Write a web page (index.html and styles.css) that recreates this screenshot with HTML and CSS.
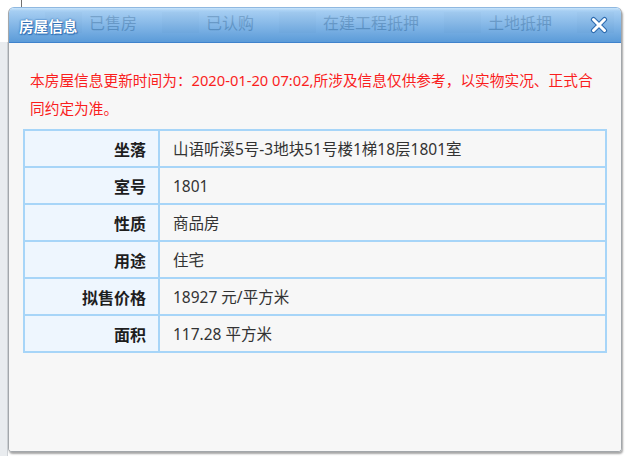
FILE: index.html
```html
<!DOCTYPE html>
<html lang="zh-CN">
<head>
<meta charset="utf-8">
<title>房屋信息</title>
<link rel="stylesheet" href="styles.css">
</head>
<body>
<div class="page">
  <div class="topline"></div>
  <div class="tabbar">
    <div class="tab"><span class="tab-icon"></span><span class="tab-label">已售房</span></div>
    <div class="tab"><span class="tab-icon"></span><span class="tab-label">已认购</span></div>
    <div class="tab"><span class="tab-icon"></span><span class="tab-label">在建工程抵押</span></div>
    <div class="tab"><span class="tab-icon"></span><span class="tab-label">土地抵押</span></div>
    <div class="tab"><span class="tab-icon"></span></div>
  </div>
  <div class="side"></div>

  <div class="dialog">
    <div class="dialog-header">
      <span class="dialog-title">房屋信息</span>
      <button class="close" aria-label="关闭">
        <svg width="18" height="18" viewBox="0 0 18 18">
          <path d="M3.5 3.5 L14.5 14.5 M14.5 3.5 L3.5 14.5" stroke="#2e6cb0" stroke-width="5.2" stroke-linecap="round" fill="none"/>
          <path d="M3.5 3.5 L14.5 14.5 M14.5 3.5 L3.5 14.5" stroke="#ffffff" stroke-width="3" stroke-linecap="round" fill="none"/>
        </svg>
      </button>
    </div>
    <div class="dialog-body">
      <p class="notice">本房屋信息更新时间为：2020-01-20 07:02,所涉及信息仅供参考，以实物实况、正式合<br>同约定为准。</p>
      <table class="info">
        <tr><th>坐落</th><td>山语听溪5号-3地块51号楼1梯18层1801室</td></tr>
        <tr><th>室号</th><td>1801</td></tr>
        <tr><th>性质</th><td>商品房</td></tr>
        <tr><th>用途</th><td>住宅</td></tr>
        <tr><th>拟售价格</th><td>18927 元/平方米</td></tr>
        <tr><th>面积</th><td>117.28 平方米</td></tr>
      </table>
    </div>
  </div>
</div>
</body>
</html>
```

FILE: styles.css
```css
html, body {
  margin: 0;
  padding: 0;
}

body {
  background: #ffffff;
  font-family: "Noto Sans", "Noto Sans CJK SC", sans-serif;
}

.page {
  position: relative;
  width: 625px;
  height: 456px;
  overflow: hidden;
  background: #ffffff;
}

.topline {
  position: absolute;
  left: 21px;
  top: 0;
  width: 1px;
  height: 8px;
  background: #707070;
}

.tabbar {
  display: flex;
  margin-top: 7px;
  height: 35px;
  padding: 5px 0 0 45px;
  box-sizing: border-box;
  align-items: flex-start;
  white-space: nowrap;
}

.tab {
  display: flex;
  flex: none;
  align-items: center;
  gap: 7px;
  padding-right: 25px;
}

.tab-icon {
  flex: none;
  width: 37px;
  height: 21px;
  background: rgba(0, 0, 0, 0.08);
}

.tab-label {
  font-size: 16px;
  line-height: 20px;
  margin-top: -2px;
  color: #1a1a1a;
  font-family: "Noto Sans CJK SC", sans-serif;
}

.side {
  width: 7px;
  height: 414px;
  background: #e9ecef;
  border-right: 1px solid #cfd3d7;
}

.dialog {
  position: absolute;
  left: 8px;
  top: 7px;
  width: 612px;
  height: 443px;
  display: flex;
  flex-direction: column;
  background: transparent;
  border: 1px solid #a3a7ab;
  border-top-color: #8fb8e0;
  border-radius: 6px 6px 4px 4px;
  box-shadow: 1px 2px 2px rgba(0, 0, 0, 0.35);
  overflow: hidden;
}

.dialog-header {
  display: flex;
  align-items: center;
  justify-content: space-between;
  flex: none;
  height: 34px;
  padding: 0 10px 0 10px;
  background: linear-gradient(to bottom, rgba(190, 224, 250, 0.85) 0px, rgba(150, 197, 240, 0.85) 3px, rgba(63, 138, 210, 0.85) 100%);
  border-bottom: 1px solid #3f82cc;
}

.dialog-title {
  font-family: "Noto Sans CJK SC", sans-serif;
  font-size: 14.6px;
  font-weight: bold;
  color: #ffffff;
  text-shadow: 0 0 2px #2b6cb3, 0 0 1px #2b6cb3, 1px 1px 1px #2b6cb3;
}

.close {
  display: flex;
  padding: 0;
  margin: 0;
  border: 0;
  background: transparent;
  margin-right: 3px;
}

.dialog-body {
  flex: 1;
  padding: 0 14px;
  background: #f7f7f7;
}

.notice {
  margin: 23px 0 7px 0;
  padding: 0 0 0 7px;
  font-size: 14.7px;
  line-height: 28px;
  color: #fa1e1e;
  white-space: nowrap;
}

.info {
  width: 584px;
  border-collapse: collapse;
  border: 2px solid #a7d5f8;
}

.info th,
.info td {
  height: 35px;
  border: 2px solid #a7d5f8;
  padding: 0;
}

.info th {
  width: 121px;
  padding-right: 12px;
  text-align: right;
  background: #eef6fe;
  font-size: 16px;
  font-weight: bold;
  color: #1e1e1e;
}

.info td {
  padding-left: 13px;
  text-align: left;
  font-size: 15.5px;
  color: #333333;
}
```
